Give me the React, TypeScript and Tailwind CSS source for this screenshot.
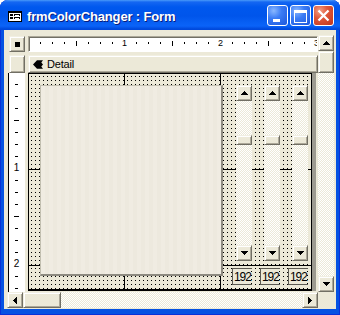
import React from "react";

const raised =
  "bg-[#ece9d8] border border-t-[#f1efe2] border-l-[#f1efe2] border-r-[#716f64] border-b-[#716f64] shadow-[inset_1px_1px_0_#ffffff,inset_-1px_-1px_0_#aca899]";

const dither =
  "bg-[#f5f4ea] bg-[image:conic-gradient(#ffffff_25%,#ece9d8_0_50%,#ffffff_0_75%,#ece9d8_0)] bg-[length:2px_2px]";

const UP = "M3 0h1v1h1v1h1v1h1v1H0V3h1V2h1V1h1z";
const DOWN = "M0 0h7v1h-1v1h-1v1h-1v1h-1v-1h-1v-1h-1v-1h-1z";
const LEFT = "M3 0h1v7h-1v-1h-1v-1h-1v-1h-1v-1h1v-1h1v-1h1z";
const RIGHT = "M0 0h1v1h1v1h1v1h1v1h-1v1h-1v1h-1v1h-1z";

function Arrow({ d, w, h }: { d: string; w: number; h: number }) {
  return (
    <svg width={w} height={h} viewBox={`0 0 ${w} ${h}`} shapeRendering="crispEdges">
      <path d={d} fill="#000" />
    </svg>
  );
}

function ArrowBtn({ dir, className = "" }: { dir: "up" | "down" | "left" | "right"; className?: string }) {
  const v = dir === "up" || dir === "down";
  const d = dir === "up" ? UP : dir === "down" ? DOWN : dir === "left" ? LEFT : RIGHT;
  return (
    <div className={`${raised} w-[16px] h-[16px] shrink-0 flex items-center justify-center ${className}`}>
      <Arrow d={d} w={v ? 7 : 4} h={v ? 4 : 7} />
    </div>
  );
}

function FormIcon() {
  return (
    <svg width="14" height="11" viewBox="0 0 14 11" shapeRendering="crispEdges">
      <rect x="0" y="0" width="14" height="11" fill="#000" />
      <rect x="1" y="2" width="12" height="8" fill="#fff" />
      <rect x="2" y="3" width="3" height="2" fill="#000" />
      <rect x="6" y="3" width="6" height="2" fill="#000" />
      <rect x="2" y="6" width="3" height="2" fill="#000" />
      <rect x="6" y="6" width="6" height="2" fill="#000" />
      <rect x="7" y="4" width="4" height="1" fill="#fff" />
      <rect x="7" y="7" width="4" height="1" fill="#fff" />
    </svg>
  );
}

function TitleBar() {
  const blue =
    "bg-[image:radial-gradient(circle_at_30%_25%,#8ab8ff_0%,#3b7cf5_40%,#1c57dc_100%)]";
  return (
    <div className="h-[30px] shrink-0 flex items-start rounded-t-[8px] bg-[image:linear-gradient(180deg,#4a9af9_0px,#1567f2_2px,#0058ee_7px,#0055eb_16px,#0860f4_23px,#0a63f8_26px,#0049dc_29px)]">
      <div className="flex items-center h-[30px] pl-[8px] pt-[2px]">
        <FormIcon />
        <span className="ml-[5px] text-white font-bold text-[13px] tracking-[-0.15px] leading-none [text-shadow:1px_1px_0_#0a1d7a]">
          frmColorChanger : Form
        </span>
      </div>
      <div className="ml-auto mt-[5px] mr-[6px] flex gap-[2px]">
        <div className={`relative w-[21px] h-[21px] rounded-[3px] border border-white ${blue}`}>
          <div className="absolute left-[5px] top-[13px] w-[7px] h-[3px] bg-white" />
        </div>
        <div className={`relative w-[21px] h-[21px] rounded-[3px] border border-white ${blue}`}>
          <div className="absolute left-[3px] top-[4px] w-[13px] h-[13px] border border-white border-t-[3px]" />
        </div>
        <div className="relative w-[21px] h-[21px] rounded-[3px] border border-white bg-[image:radial-gradient(circle_at_30%_25%,#f3a085_0%,#e0583a_40%,#c0341c_100%)]">
          <svg className="absolute left-0 top-0" width="19" height="19" viewBox="0 0 19 19">
            <path d="M4.5 4.5L14.5 14.5M14.5 4.5L4.5 14.5" stroke="#fff" strokeWidth="2.3" />
          </svg>
        </div>
      </div>
    </div>
  );
}

function HRuler() {
  const ticks = Array.from({ length: 24 }, (_, i) => i + 1);
  return (
    <div className="relative h-[16px] bg-white border border-t-[#aca899] border-l-[#aca899] border-r-white border-b-white shadow-[inset_1px_1px_0_#716f64] overflow-hidden">
      <svg width="288" height="14" viewBox="0 0 288 14" shapeRendering="crispEdges">
        {ticks.map((k) => {
          const x = 12 * k - 1;
          if (k % 8 === 0) return null;
          if (k % 4 === 0) return <rect key={k} x={x} y={4} width={1} height={5} fill="#000" />;
          return <rect key={k} x={x} y={5} width={1} height={2} fill="#000" />;
        })}
      </svg>
      <span className="absolute left-[92px] top-[2px] w-[7px] text-center text-[9px] leading-[9px] text-black">1</span>
      <span className="absolute left-[188px] top-[2px] w-[7px] text-center text-[9px] leading-[9px] text-black">2</span>
      <span className="absolute left-[284px] top-[2px] w-[7px] text-center text-[9px] leading-[9px] text-black">3</span>
    </div>
  );
}

function VRuler() {
  const ticks = Array.from({ length: 18 }, (_, i) => i + 1);
  return (
    <div className="relative flex-1 bg-white border-l border-black overflow-hidden">
      <svg width="16" height="219" viewBox="0 0 16 219" shapeRendering="crispEdges">
        {ticks.map((k) => {
          const y = 12 * k - 1;
          if (k % 8 === 0) return null;
          if (k % 4 === 0) return <rect key={k} x={5} y={y} width={5} height={1} fill="#000" />;
          return <rect key={k} x={6} y={y} width={3} height={1} fill="#000" />;
        })}
      </svg>
      <span className="absolute left-[4px] top-[90px] w-[7px] text-center text-[10px] leading-[10px] text-black">1</span>
      <span className="absolute left-[4px] top-[186px] w-[7px] text-center text-[10px] leading-[10px] text-black">2</span>
    </div>
  );
}

function DetailBar() {
  return (
    <div className={`${raised} h-[18px] mt-[3px] flex items-center pl-[4px]`}>
      <svg width="10" height="9" viewBox="0 0 10 9">
        <path d="M0 4.5L4 0.3H10L8.3 2.4L10 4.5L8.3 6.6L10 8.7H4Z" fill="#000" />
      </svg>
      <span className="ml-[4px] text-[11px] leading-none text-black tracking-[-0.2px]">Detail</span>
    </div>
  );
}

function ControlScroll({ className }: { className: string }) {
  return (
    <div className={`absolute top-[11px] w-[16px] h-[176px] flex flex-col ${className}`}>
      <ArrowBtn dir="up" />
      <div className={`h-[34px] ${dither}`} />
      <div className={`${raised} h-[10px]`} />
      <div className={`flex-1 ${dither}`} />
      <ArrowBtn dir="down" />
    </div>
  );
}

function TextBox({ className }: { className: string }) {
  return (
    <div
      className={`absolute top-[194px] w-[20px] h-[17px] bg-[#ece9d8] border-l border-t border-b border-[#5c5a52] flex items-center pl-[1px] ${className}`}
    >
      <span className="text-[12px] leading-none tracking-[-1.1px] text-black">192</span>
      <div className="absolute right-0 top-0 h-full w-[1px] bg-[image:linear-gradient(#000_1px,transparent_1px)] bg-[length:1px_4px] bg-[position:0_2px]" />
    </div>
  );
}

function Canvas() {
  return (
    <div className="flex-1 flex">
      <div className="relative w-[284px] h-[218px] border-l border-t border-r border-b-2 border-black bg-black bg-[image:linear-gradient(90deg,transparent_1px,#ece9d8_1px),linear-gradient(transparent_1px,#ece9d8_1px)] bg-[length:4px_4px] bg-[position:2px_2px] overflow-hidden">
        <div className="absolute left-[95px] top-0 w-[1px] h-full bg-black" />
        <div className="absolute left-[191px] top-0 w-[1px] h-full bg-black" />
        <div className="absolute top-[95px] left-0 h-[1px] w-full bg-black" />
        <div className="absolute top-[191px] left-0 h-[1px] w-full bg-black" />
        <div className="absolute left-[11px] top-[11px] w-[183px] h-[191px] bg-[#efebe1] bg-[image:linear-gradient(90deg,#f0ece2_50%,#ede9de_50%)] bg-[length:8px_100%] border-t border-l border-t-[#c2bfb0] border-l-[#c2bfb0] border-r-2 border-b-2 border-r-[#8d8a80] border-b-[#8d8a80]" />
        <ControlScroll className="left-[207px]" />
        <ControlScroll className="left-[235px]" />
        <ControlScroll className="left-[263px]" />
        <TextBox className="left-[203px]" />
        <TextBox className="left-[231px]" />
        <TextBox className="left-[259px]" />
      </div>
      <div className="w-[4px] h-[218px] bg-[#9c9a90]" />
    </div>
  );
}

function VScroll() {
  return (
    <div className="w-[16px] flex flex-col">
      <ArrowBtn dir="up" />
      <div className={`${raised} h-[22px] shrink-0`} />
      <div className={`flex-1 ${dither}`} />
      <ArrowBtn dir="down" />
    </div>
  );
}

function HScroll() {
  return (
    <div className="h-[16px] flex">
      <ArrowBtn dir="left" />
      <div className={`${raised} w-[38px] shrink-0`} />
      <div className={`flex-1 ${dither}`} />
      <ArrowBtn dir="right" />
      <div className="w-[16px] bg-[#ece9d8]" />
    </div>
  );
}

function Client() {
  return (
    <div className="flex-1 flex flex-col bg-[#ece9d8] pt-[5px] pl-[3px] pr-[2px]">
      <div className="h-[257px] flex">
        <div className="flex-1 flex">
          <div className="ml-[1px] w-[17px] flex flex-col pt-[1px]">
            <div className={`${raised} ml-[1px] w-[16px] h-[16px] flex items-center justify-center`}>
              <div className="w-[5px] h-[5px] bg-black" />
            </div>
            <div className={`${raised} ml-[1px] w-[16px] h-[18px] mt-[3px]`} />
            <VRuler />
          </div>
          <div className="ml-[3px] flex-1 flex flex-col pt-[1px]">
            <HRuler />
            <DetailBar />
            <Canvas />
          </div>
        </div>
        <VScroll />
      </div>
      <HScroll />
    </div>
  );
}

export default function App() {
  return (
    <div className="w-[340px] h-[315px] bg-white font-['Liberation_Sans',Arial,sans-serif]">
      <div className="w-[340px] h-[315px] flex flex-col rounded-t-[8px] bg-[#0552e2] shadow-[inset_1px_0_0_#0831d9,inset_-1px_0_0_#0831d9,inset_0_-1px_0_#0831d9]">
        <TitleBar />
        <div className="flex-1 flex px-[4px] pb-[6px]">
          <Client />
        </div>
      </div>
    </div>
  );
}
